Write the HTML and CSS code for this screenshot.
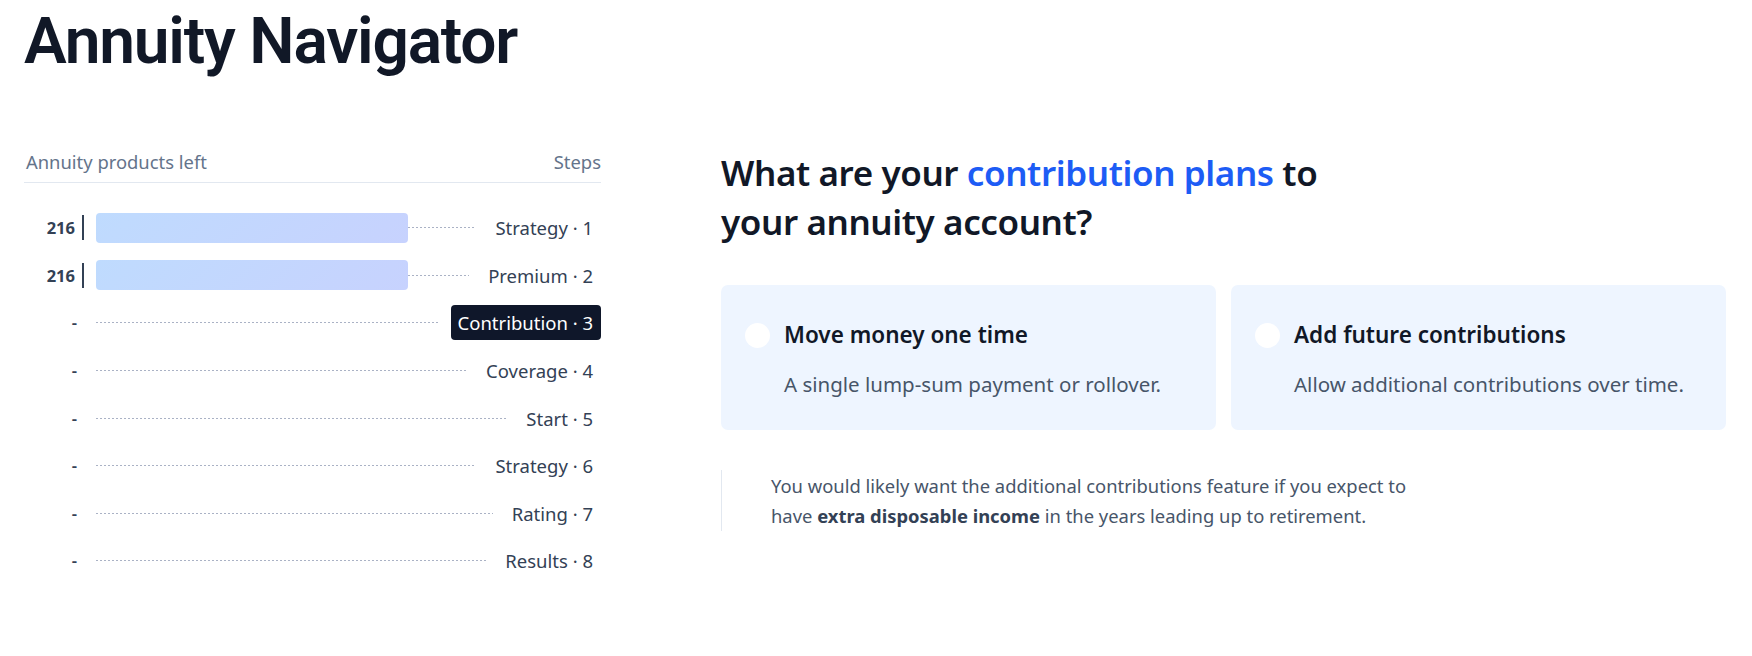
FILE: index.html
```html
<!DOCTYPE html>
<html lang="en">
<head>
<meta charset="utf-8">
<title>Annuity Navigator</title>
<link rel="stylesheet" href="styles.css">
</head>
<body>
<div class="page">
  <h1 class="title">Annuity Navigator</h1>
  <div class="layout">
    <aside class="steps">
      <div class="steps-head">
        <span>Annuity products left</span>
        <span>Steps</span>
      </div>
      <ol class="step-list">
        <li class="row"><span class="count">216</span><span class="sep"></span><span class="track"><span class="bar"></span><span class="dots"></span></span><span class="label">Strategy · 1</span></li>
        <li class="row"><span class="count">216</span><span class="sep"></span><span class="track"><span class="bar"></span><span class="dots"></span></span><span class="label">Premium · 2</span></li>
        <li class="row"><span class="count dash">-</span><span class="sep off"></span><span class="track"><span class="dots"></span></span><span class="label active">Contribution · 3</span></li>
        <li class="row"><span class="count dash">-</span><span class="sep off"></span><span class="track"><span class="dots"></span></span><span class="label">Coverage · 4</span></li>
        <li class="row"><span class="count dash">-</span><span class="sep off"></span><span class="track"><span class="dots"></span></span><span class="label">Start · 5</span></li>
        <li class="row"><span class="count dash">-</span><span class="sep off"></span><span class="track"><span class="dots"></span></span><span class="label">Strategy · 6</span></li>
        <li class="row"><span class="count dash">-</span><span class="sep off"></span><span class="track"><span class="dots"></span></span><span class="label">Rating · 7</span></li>
        <li class="row"><span class="count dash">-</span><span class="sep off"></span><span class="track"><span class="dots"></span></span><span class="label">Results · 8</span></li>
      </ol>
    </aside>
    <main class="question">
      <h2 class="q-title">What are your <span class="hl">contribution plans</span> to<br>your annuity account?</h2>
      <div class="options">
        <div class="option">
          <span class="radio"></span>
          <div class="opt-body">
            <div class="opt-title">Move money one time</div>
            <div class="opt-desc">A single lump-sum payment or rollover.</div>
          </div>
        </div>
        <div class="option">
          <span class="radio"></span>
          <div class="opt-body">
            <div class="opt-title">Add future contributions</div>
            <div class="opt-desc">Allow additional contributions over time.</div>
          </div>
        </div>
      </div>
      <div class="note">
        <p>You would likely want the additional contributions feature if you expect to have <strong>extra disposable income</strong> in the years leading up to retirement.</p>
      </div>
    </main>
  </div>
</div>
</body>
</html>
```
FILE: styles.css
```css
* { box-sizing: border-box; }
html, body { margin: 0; padding: 0; background: #ffffff; }
body { font-family: "Noto Sans", "DejaVu Sans", sans-serif; color: #0f172a; }

.page { padding: 0 26px 0 24px; }

.title {
  margin: 0;
  padding-top: 4px;
  font-family: Roboto, "Noto Sans", sans-serif;
  font-size: 64px;
  line-height: 76px;
  font-weight: 600;
  color: #111827;
  letter-spacing: -1.2px;
}

.layout {
  display: grid;
  grid-template-columns: 577px 1fr;
  column-gap: 120px;
  margin-top: 70px;
}

.steps-head {
  display: flex;
  justify-content: space-between;
  font-size: 18.4px;
  line-height: 24px;
  color: #64748b;
  padding: 0 0 8px 2px;
  border-bottom: 1px solid #e2e8f0;
}

.step-list {
  list-style: none;
  margin: 21px 0 0;
  padding: 0;
}

.row {
  display: flex;
  align-items: center;
  height: 47.6px;
}

.count {
  width: 51px;
  text-align: right;
  font-size: 16.5px;
  font-weight: 700;
  color: #334155;
}
.count.dash {
  width: 53px;
  font-weight: 600;
  color: #334155;
}

.sep {
  width: 2px;
  height: 25px;
  background: #334155;
  margin-left: 7px;
}
.sep.off { visibility: hidden; margin-left: 5px; }

.track {
  flex: 1;
  display: flex;
  align-items: center;
  margin-left: 12px;
}

.bar {
  width: 312px;
  height: 30px;
  border-radius: 4px;
  background: linear-gradient(135deg, #bfdbfe, #c7d2fe);
}

.dots {
  flex: 1;
  height: 1px;
  background-image: repeating-linear-gradient(90deg, #aab2c5 0 2px, transparent 2px 4px);
  margin-right: 12px;
}

.label {
  font-size: 18.5px;
  line-height: 25px;
  color: #334155;
  padding: 5px 8px 5px 7px;
  border-radius: 4px;
  white-space: nowrap;
}
.label.active {
  background: #0f172a;
  color: #ffffff;
}

.q-title {
  margin: -2px 0 0;
  font-size: 35px;
  line-height: 49px;
  font-weight: 600;
  color: #111827;
  letter-spacing: -0.4px;
}
.hl { color: #1d5cf5; }

.options {
  display: grid;
  grid-template-columns: 1fr 1fr;
  gap: 15px;
  margin-top: 39px;
}

.option {
  display: flex;
  align-items: flex-start;
  gap: 14px;
  background: #eef5ff;
  border-radius: 7px;
  padding: 36px 24px 30px 24px;
  min-height: 145px;
}

.radio {
  flex: none;
  width: 25px;
  height: 25px;
  border-radius: 50%;
  background: #ffffff;
  margin-top: 2px;
}

.opt-body { display: flex; flex-direction: column; }
.opt-title {
  font-size: 22.5px;
  line-height: 28px;
  font-weight: 600;
  color: #111827;
}
.opt-desc {
  margin-top: 21px;
  font-size: 20.5px;
  line-height: 28px;
  color: #475569;
}

.note {
  margin-top: 40px;
  border-left: 1px solid #e2e8f0;
  padding: 1px 0 0 49px;
  min-height: 61px;
}
.note p {
  margin: 0;
  max-width: 660px;
  font-size: 18.4px;
  line-height: 30px;
  color: #475569;
}
.note strong { font-weight: 700; color: #334155; }
```
